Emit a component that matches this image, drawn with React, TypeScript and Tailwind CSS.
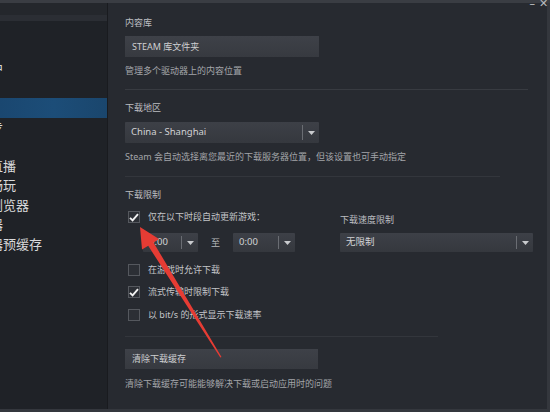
import React from "react";

const FONT = { fontFamily: '"Noto Sans", "Noto Sans CJK SC", sans-serif' };

const SIDEBAR_ITEMS = [
  "游戏中",
  "界面",
  "下载",
  "云同步",
  "音乐",
  "游戏直播",
  "远程畅玩",
  "网页浏览器",
  "控制器",
  "着色器预缓存",
];

function Caret() {
  return (
    <svg width="7" height="4" viewBox="0 0 7 4" className="block">
      <path d="M0 0h7L3.5 4z" fill="#c9cbce" />
    </svg>
  );
}

function Select({ value, className }: { value: string; className: string }) {
  return (
    <div className={`flex items-stretch bg-gradient-to-b from-[#3d4047] to-[#35383e] rounded-[1px] ${className}`}>
      <div className="flex-1 flex items-center pl-[6px] text-[9.5px] text-[#d2d3d5] whitespace-nowrap overflow-hidden">
        {value}
      </div>
      <div className="w-px my-[3px] bg-[#6a6d73]" />
      <div className="w-[16px] flex items-center justify-center">
        <Caret />
      </div>
    </div>
  );
}

function Checkbox({ checked, label }: { checked: boolean; label: string }) {
  return (
    <div className="flex items-center h-[14px] pl-[3px]">
      <div className="w-[12px] h-[12px] border border-[#55585e] bg-[#2c2f35] flex items-center justify-center">
        {checked && (
          <svg width="10" height="9" viewBox="0 0 10 9">
            <path d="M1 4.8l2.6 2.6L9 1.2" stroke="#f2f2f2" strokeWidth="1.9" fill="none" />
          </svg>
        )}
      </div>
      <span className="ml-[8px] text-[9px] text-[#c3c5c8] whitespace-nowrap">{label}</span>
    </div>
  );
}

export default function App() {
  return (
    <div className="relative w-[550px] h-[412px] overflow-hidden bg-[#1f2126] flex flex-col" style={FONT}>
      {/* top edge */}
      <div className="h-[3px] bg-[#3a3d43]" />
      <div className="flex flex-1 min-h-0 border-r-[3px] border-b-[3px] border-[#34373d]">
        {/* sidebar */}
        <div className="w-[108px] shrink-0 bg-[#1f2227] border-r border-[#191b1f] flex flex-col overflow-hidden">
          <div className="h-[12px] bg-[#24272c]" />
          <div className="h-[6px] bg-[#2b2e34]" />
          <div className="h-[38px]" />
          {SIDEBAR_ITEMS.map((item, i) => (
            <div
              key={item}
              className={`h-[19.5px] leading-[19.5px] text-[13px] text-[#d8d9db] whitespace-nowrap ${
                i === 2 ? "bg-gradient-to-r from-[#1a4770] via-[#1c4d78] to-[#1a466d]" : ""
              }`}
            >
              <span className="block -ml-[36px]">{item}</span>
            </div>
          ))}
        </div>

        {/* main panel */}
        <div className="flex-1 bg-[#272a30] pl-[17px] pr-[14px] pt-[13px] flex flex-col">
          <div className="text-[9px] leading-[14px] text-[#bcbec1]">内容库</div>
          <div className="mt-[6px] w-[194px] h-[21px] bg-gradient-to-b from-[#3e4148] to-[#373a40] flex items-center pl-[7px] text-[9px] text-[#cfd0d2]">
            STEAM 库文件夹
          </div>
          <div className="mt-[7px] text-[9px] leading-[14px] text-[#a3a5a9]">管理多个驱动器上的内容位置</div>
          <div className="mt-[11px] h-px bg-[#383b41] mr-[5px]" />

          <div className="mt-[11px] text-[9px] leading-[14px] text-[#bcbec1]">下载地区</div>
          <Select value="China - Shanghai" className="mt-[7px] w-[194px] h-[21px]" />
          <div className="mt-[7px] text-[9px] leading-[14px] text-[#a3a5a9] whitespace-nowrap">
            Steam 会自动选择离您最近的下载服务器位置，但该设置也可手动指定
          </div>
          <div className="mt-[12px] h-px bg-[#33363c] mr-[33px]" />

          <div className="mt-[11px] text-[9px] leading-[14px] text-[#bcbec1]">下载限制</div>
          <div className="mt-[8px] flex">
            <div className="w-[215px] shrink-0">
              <Checkbox checked label="仅在以下时段自动更新游戏：" />
              <div className="mt-[9px] flex items-center pl-[18px]">
                <Select value="0:00" className="w-[55px] h-[19px]" />
                <span className="mx-[13px] text-[9px] text-[#b7b9bc]">至</span>
                <Select value="0:00" className="w-[62px] h-[19px]" />
              </div>
            </div>
            <div className="flex-1">
              <div className="mt-[3px] text-[9px] leading-[14px] text-[#bcbec1]">下载速度限制</div>
              <Select value="无限制" className="mt-[6px] h-[19px]" />
            </div>
          </div>

          <div className="mt-[10.5px] flex flex-col gap-[8.5px]">
            <Checkbox checked={false} label="在游戏时允许下载" />
            <Checkbox checked label="流式传输时限制下载" />
            <Checkbox checked={false} label="以 bit/s 的形式显示下载速率" />
          </div>
          <div className="mt-[14px] h-px bg-[#33363c] w-[313px]" />

          <div className="mt-[12px] w-[193px] h-[20px] bg-gradient-to-b from-[#3e4148] to-[#373a40] flex items-center pl-[7px] text-[9px] text-[#cfd0d2]">
            清除下载缓存
          </div>
          <div className="mt-[8px] text-[9px] leading-[14px] text-[#a3a5a9] whitespace-nowrap">
            清除下载缓存可能能够解决下载或启动应用时的问题
          </div>
        </div>
      </div>

      {/* window controls, cut off at the top */}
      <div className="absolute top-[-5px] right-[2px] flex items-center gap-[4px] text-[11px] text-[#b9bbbe]">
        <span>–</span>
        <span>✕</span>
      </div>

      {/* red arrow annotation */}
      <svg className="absolute inset-0 pointer-events-none" width="550" height="412" viewBox="0 0 550 412">
        <polygon
          points="140,227 159,239 153.5,242.4 221.5,357 220.3,357.4 148.2,245.8 142,249.5"
          fill="#e63c34"
        />
      </svg>
    </div>
  );
}
